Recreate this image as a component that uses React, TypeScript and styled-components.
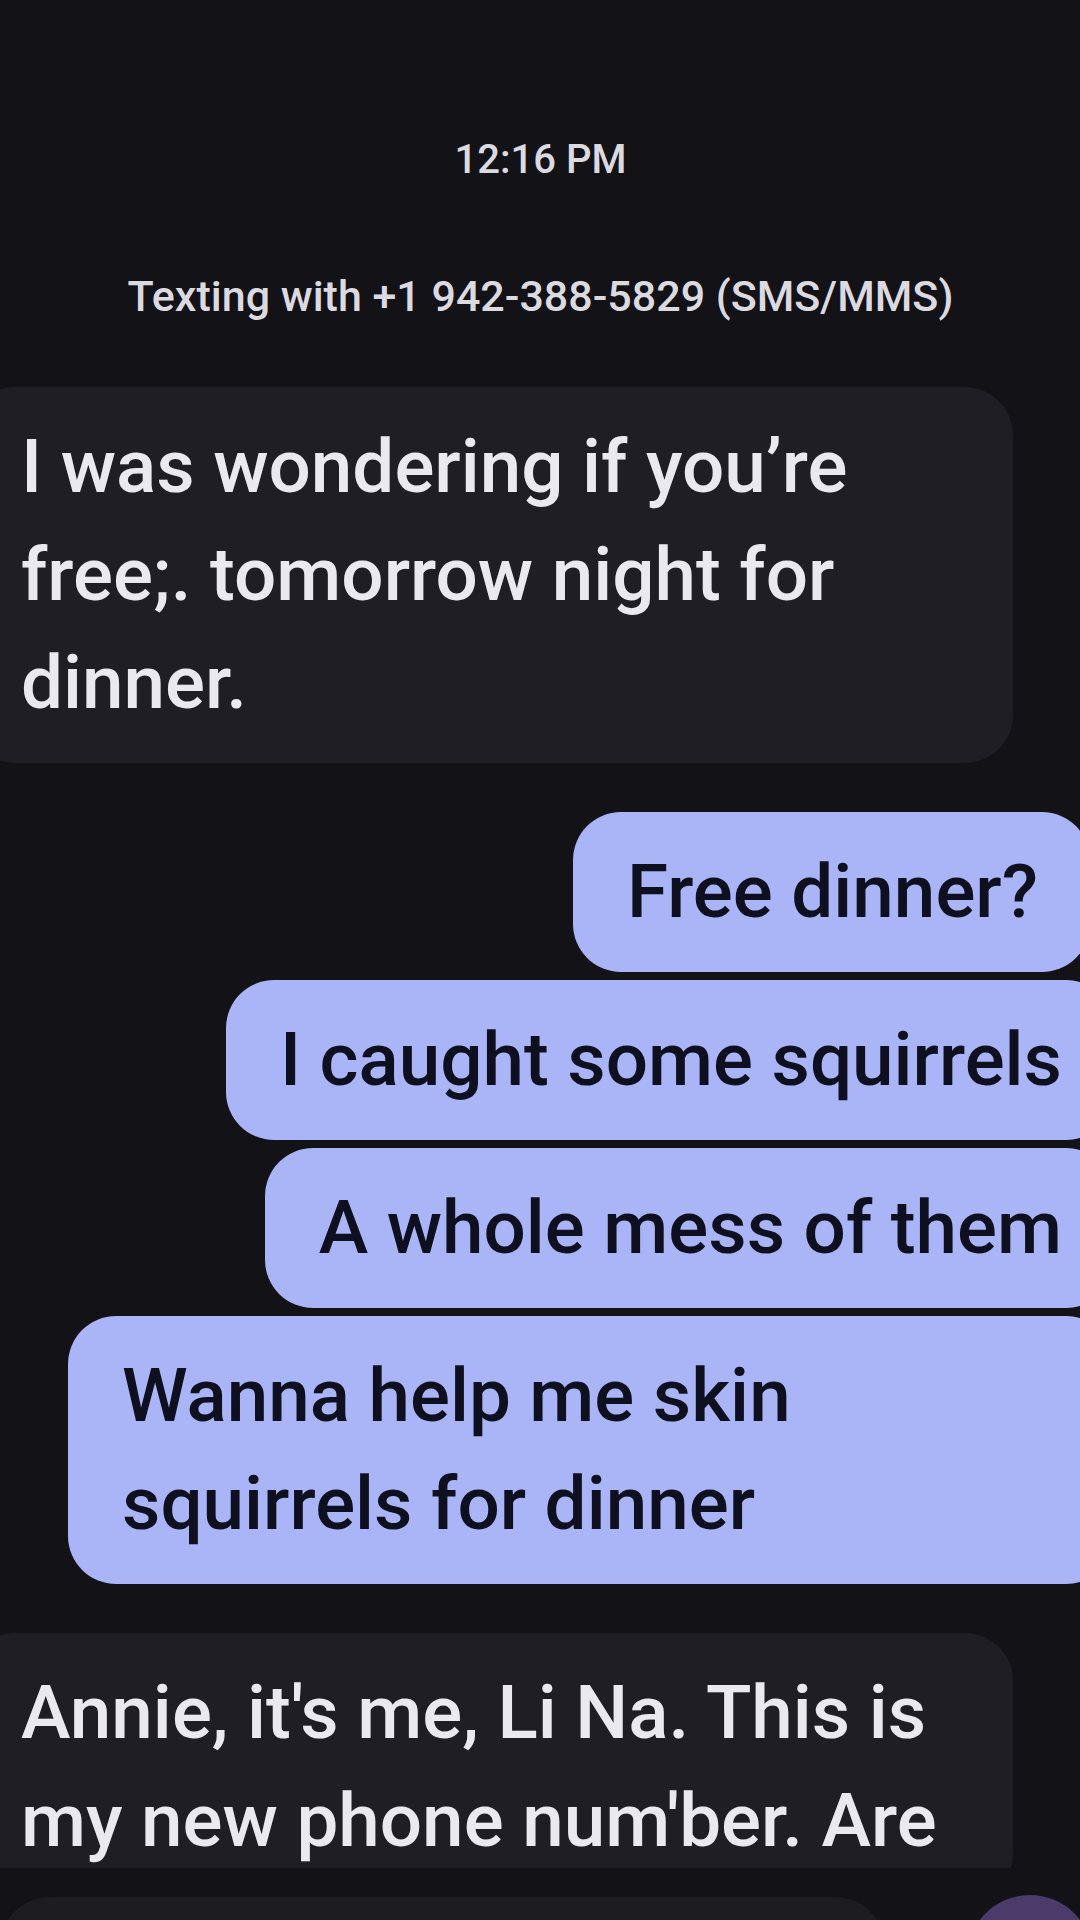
import styled, { createGlobalStyle } from "styled-components";

const GlobalStyle = createGlobalStyle`
  html, body {
    margin: 0;
    padding: 0;
    background: #131217;
  }
  * {
    box-sizing: border-box;
  }
`;

type Message = { text: string; first?: boolean };

const incomingTop: Message[] = [
  { text: "I was wondering if you\u2019re free;. tomorrow night for dinner." },
];

const outgoing: Message[] = [
  { text: "Free dinner?", first: true },
  { text: "I caught some squirrels" },
  { text: "A whole mess of them" },
  { text: "Wanna help me skin squirrels for dinner" },
];

const incomingBottom: Message[] = [
  { text: "Annie, it's me, Li Na. This is my new phone num'ber. Are" },
];

const App = () => {
  return (
    <Screen>
      <GlobalStyle />
      <Thread>
        <Meta>12:16 PM</Meta>
        <Meta $banner>Texting with +1 942-388-5829 (SMS/MMS)</Meta>

        <Group $top>
          {incomingTop.map((m) => (
            <Bubble key={m.text}>{m.text}</Bubble>
          ))}
        </Group>

        <Group $out>
          {outgoing.map((m) => (
            <Bubble key={m.text} $out $first={m.first}>
              {m.text}
            </Bubble>
          ))}
        </Group>

        <Group>
          {incomingBottom.map((m) => (
            <Bubble key={m.text}>{m.text}</Bubble>
          ))}
        </Group>
      </Thread>

      <ComposeBar>
        <InputPill />
        <SendButton />
      </ComposeBar>
    </Screen>
  );
};

export default App;

const Screen = styled.div`
  width: 1080px;
  height: 1920px;
  display: flex;
  flex-direction: column;
  overflow: hidden;
  background: #131217;
  font-family: Roboto, "Noto Sans", sans-serif;
`;

const Thread = styled.div`
  flex: 0 0 1868px;
  margin: 0 -34px 0 -33px;
  padding-top: 132px;
  display: flex;
  flex-direction: column;
  overflow: hidden;
`;

const Meta = styled.div<{ $banner?: boolean }>`
  margin-top: ${({ $banner }) => ($banner ? "80px" : "0")};
  text-align: center;
  font-size: ${({ $banner }) => ($banner ? "43px" : "40px")};
  line-height: 56px;
  font-weight: 500;
  color: #dcdae1;
`;

const Group = styled.div<{ $out?: boolean; $top?: boolean }>`
  margin-top: ${({ $top }) => ($top ? "63px" : "49px")};
  display: flex;
  flex-direction: column;
  gap: 8px;
  align-items: ${({ $out }) => ($out ? "flex-end" : "flex-start")};
`;

const Bubble = styled.div<{ $out?: boolean; $first?: boolean }>`
  max-width: 1046px;
  padding: 26px 52px 26px 54px;
  border-radius: 48px;
  margin-right: ${({ $first }) => ($first ? "24px" : "0")};
  font-size: 74.6px;
  line-height: 108px;
  font-weight: 500;
  background: ${({ $out }) => ($out ? "#a9b5f7" : "#1f1e24")};
  color: ${({ $out }) => ($out ? "#0e0f1f" : "#ebe9f0")};
`;

const ComposeBar = styled.div`
  flex: 1;
  margin-right: -13px;
  padding-top: 29px;
  display: flex;
  align-items: flex-start;
  gap: 82px;
`;

const InputPill = styled.div`
  flex: 1;
  height: 100px;
  border-radius: 56px;
  background: #1d1c21;
`;

const SendButton = styled.div`
  width: 126px;
  height: 126px;
  margin-top: -2px;
  border-radius: 50%;
  background: #4b3b6b;
`;
